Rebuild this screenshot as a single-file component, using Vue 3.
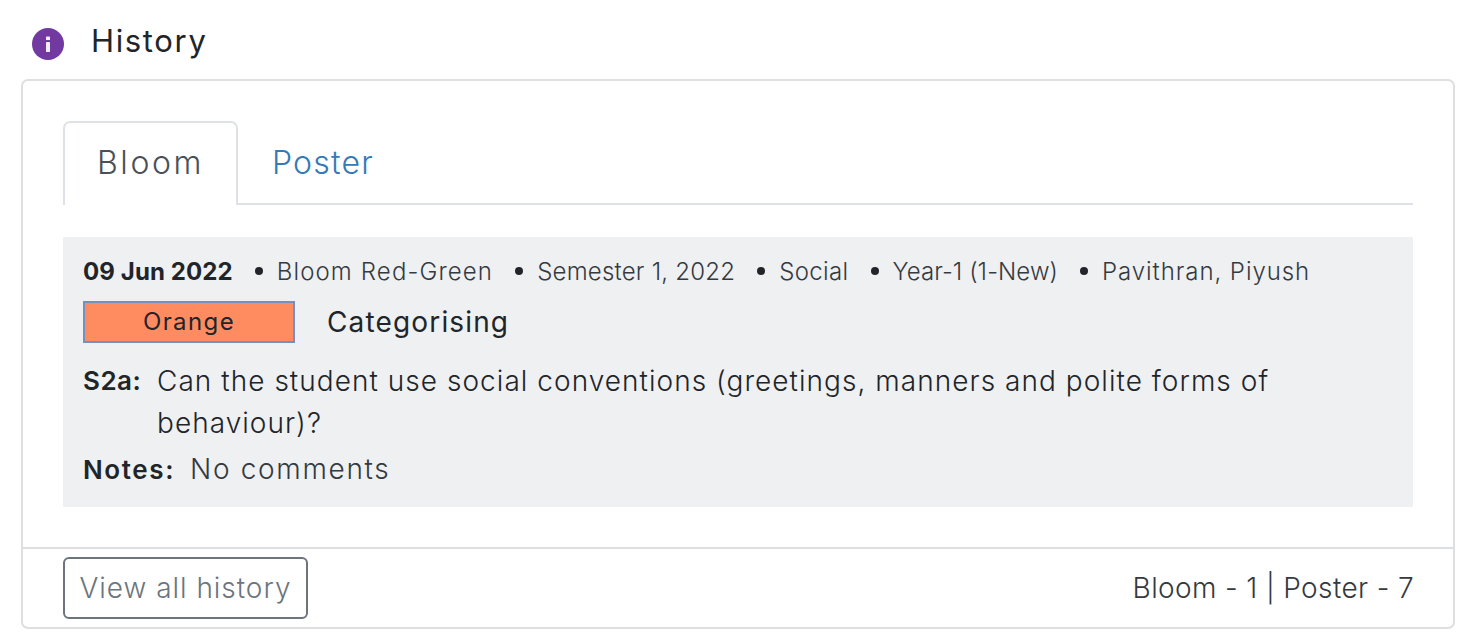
<script setup>
const meta = [
  { label: 'Bloom Red-Green', cls: 'm1' },
  { label: 'Semester 1, 2022', cls: 'm2' },
  { label: 'Social', cls: 'm3' },
  { label: 'Year-1 (1-New)', cls: 'm4' },
  { label: 'Pavithran, Piyush', cls: 'm5' }
]
</script>

<template>
  <div class="page">
    <header class="head">
      <svg class="info" viewBox="0 0 34 34" width="34" height="34" aria-hidden="true">
        <circle cx="17" cy="17" r="16" fill="#7239a0" />
        <rect x="15" y="9.5" width="4" height="3.6" rx="0.6" fill="#f3edf8" />
        <rect x="15" y="15" width="4" height="10" rx="0.4" fill="#f3edf8" />
      </svg>
      <h1 class="title">History</h1>
    </header>

    <section class="card">
      <div class="body">
        <nav class="tabs">
          <a class="tab active">Bloom</a>
          <a class="tab link">Poster</a>
        </nav>
        <article class="panel">
          <div class="meta">
            <strong class="date">09 Jun 2022</strong>
            <span v-for="m in meta" :key="m.label" class="meta-item" :class="m.cls"><i class="dot"></i>{{ m.label }}</span>
          </div>
          <div class="grade">
            <span class="badge">Orange</span>
            <span class="skill">Categorising</span>
          </div>
          <div class="question">
            <strong class="code">S2a:</strong>
            <p class="qtext">Can the student use social conventions (greetings, manners and polite forms of behaviour)?</p>
          </div>
          <div class="notes">
            <strong class="nlabel">Notes:</strong>
            <span class="ntext">No comments</span>
          </div>
        </article>
      </div>
      <footer class="foot">
        <button class="btn" type="button">View all history</button>
        <span class="counts">Bloom - 1 | Poster - 7</span>
      </footer>
    </section>
  </div>
</template>

<style>
html, body { margin: 0; background: #fff; }
</style>

<style scoped>
.page {
  width: 1466px;
  height: 644px;
  box-sizing: border-box;
  padding: 0 11px 0 21px;
  font-family: Inter, "Liberation Sans", sans-serif;
  color: #212529;
  overflow: hidden;
}
.head {
  height: 79px;
  display: flex;
  align-items: center;
  padding-left: 10px;
  gap: 26px;
}
.info { margin-top: 9px; flex: none; }
.title {
  margin: 2px 0 0;
  font-size: 31px;
  font-weight: 400;
  line-height: 1;
  letter-spacing: 1.65px;
}
.card {
  box-sizing: border-box;
  height: 550px;
  border: 2px solid #dedfe0;
  border-radius: 7px;
  display: flex;
  flex-direction: column;
}
.body {
  height: 468px;
  box-sizing: border-box;
  padding: 40px 40px 0;
  border-bottom: 2px solid #dedfe0;
}
.tabs {
  display: flex;
  height: 84px;
  box-sizing: border-box;
  border-bottom: 2px solid #dee2e6;
}
.tab {
  font-size: 32px;
  font-weight: 300;
  line-height: 84px;
  letter-spacing: 1.2px;
  padding: 0 34px;
  height: 84px;
  box-sizing: border-box;
}
.active {
  width: 175px;
  padding: 0;
  line-height: 80px;
  letter-spacing: 2.6px;
  text-align: center;
  color: #495057;
  background: #fff;
  border: 2px solid #dee2e6;
  border-bottom: 0;
  border-radius: 7px 7px 0 0;
}
.link { color: #337ab7; }
.panel {
  margin-top: 32px;
  height: 270px;
  box-sizing: border-box;
  padding: 17px 20px 0;
  background: #eff0f2;
}
.meta {
  display: flex;
  align-items: center;
  height: 34px;
  font-size: 24px;
  color: #343a40;
  font-weight: 300;
  white-space: nowrap;
}
.date { font-weight: 700; color: #212529; letter-spacing: 0.1px; }
.meta-item { display: inline-flex; align-items: center; margin-left: 22px; }
.m1 { letter-spacing: 1.13px; }
.m2 { letter-spacing: 0.22px; }
.m3 { letter-spacing: 0.35px; }
.m4 { letter-spacing: 0.07px; }
.m5 { letter-spacing: 0.94px; }
.dot {
  width: 8px;
  height: 8px;
  border-radius: 50%;
  background: #212529;
  margin-right: 14px;
}
.grade {
  display: flex;
  align-items: center;
  margin-top: 13px;
  gap: 32px;
}
.badge {
  box-sizing: border-box;
  width: 212px;
  height: 42px;
  line-height: 38px;
  text-align: center;
  border: 2px solid #7391c0;
  background: #ff8c61;
  color: #212529;
  font-size: 24px;
  font-weight: 400;
  letter-spacing: 1.4px;
}
.skill { font-size: 28px; letter-spacing: 1.15px; }
.question {
  display: flex;
  margin-top: 17px;
  font-size: 28px;
  line-height: 42px;
}
.code { width: 74px; flex: none; font-size: 26px; font-weight: 600; letter-spacing: 0.5px; }
.qtext { margin: 0; width: 1130px; font-weight: 300; letter-spacing: 1.04px; }
.notes {
  display: flex;
  align-items: center;
  margin-top: 4px;
  height: 42px;
}
.nlabel { font-size: 26px; font-weight: 600; margin-right: 15px; letter-spacing: 1.6px; }
.ntext { font-size: 28px; font-weight: 300; color: #343a40; letter-spacing: 1.66px; }
.foot {
  flex: 1;
  display: flex;
  align-items: center;
  justify-content: space-between;
  padding: 0 39px 0 40px;
}
.btn {
  box-sizing: border-box;
  width: 245px;
  height: 62px;
  padding: 0;
  background: #fff;
  border: 2px solid #6c757d;
  border-radius: 6px;
  color: #6c757d;
  font: 300 28px Inter, "Liberation Sans", sans-serif;
  letter-spacing: 0.97px;
}
.counts {
  font-size: 28px;
  font-weight: 300;
  color: #343a40;
  letter-spacing: 0.37px;
}
</style>
